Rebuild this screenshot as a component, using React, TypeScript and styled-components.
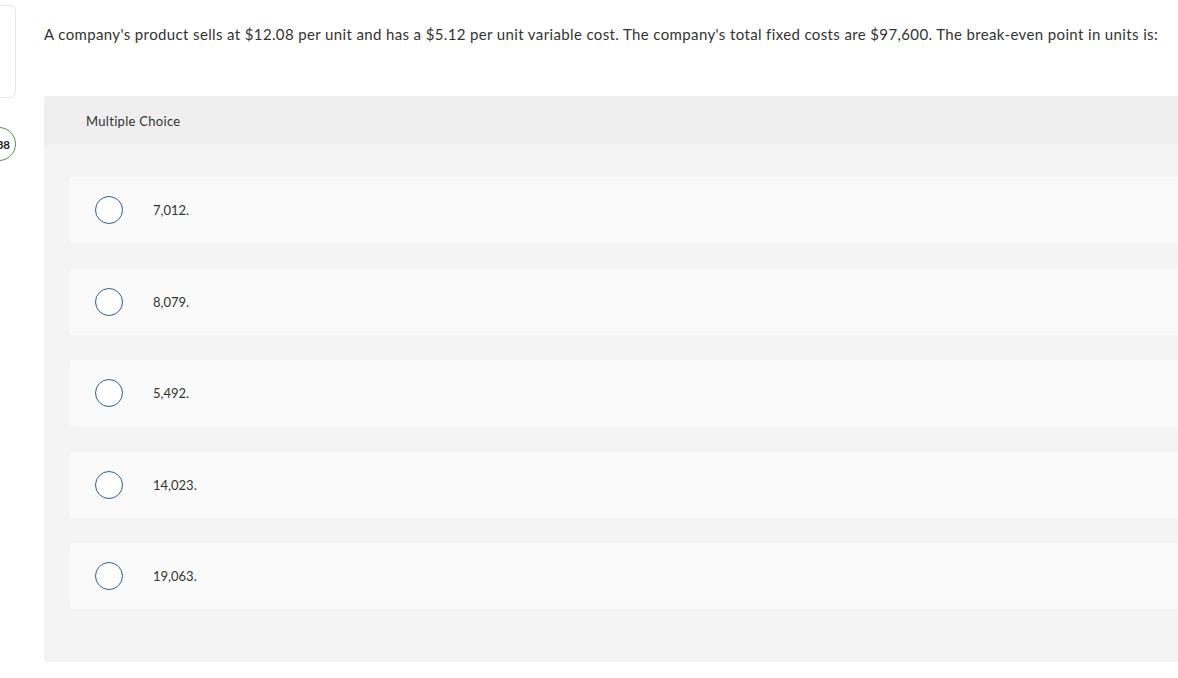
import React from "react";
import styled, { createGlobalStyle } from "styled-components";

const Global = createGlobalStyle`
  html, body { margin: 0; padding: 0; background: #ffffff; }
  body { font-family: Lato, "Open Sans", "Liberation Sans", sans-serif; color: #333333; overflow: hidden; }
`;

const Page = styled.div`
  display: flex;
  align-items: flex-start;
  gap: 28px;
  width: 1178px;
  height: 678px;
  overflow: hidden;
`;

const Rail = styled.div`
  width: 16px;
  flex: none;
  display: flex;
  flex-direction: column;
  align-items: flex-end;
  padding-top: 5px;
`;

const SideCard = styled.div`
  width: 40px;
  height: 91px;
  border: 1px solid #e6e6e6;
  border-radius: 6px;
  background: #fff;
`;

const Badge = styled.div`
  margin-top: 29px;
  width: 34px;
  height: 34px;
  border: 1.5px solid #5b8c4f;
  border-radius: 50%;
  background: #fff;
  display: flex;
  align-items: center;
  justify-content: flex-end;
  padding-right: 5px;
  box-sizing: border-box;
  font-size: 11.5px;
  font-weight: 700;
  color: #222;
`;

const Main = styled.div`
  flex: 1;
  display: flex;
  flex-direction: column;
  padding-top: 24px;
  min-width: 0;
`;

const Question = styled.p`
  margin: 0;
  font-size: 15px;
  line-height: 20px;
  letter-spacing: 0.37px;
  color: #333;
  white-space: nowrap;
`;

const Panel = styled.section`
  margin-top: 52px;
  background: #f4f4f4;
  border-radius: 4px 0 0 4px;
  height: 566px;
  box-sizing: border-box;
`;

const PanelHeader = styled.div`
  height: 49px;
  background: #efefef;
  border-radius: 4px 0 0 0;
  display: flex;
  align-items: center;
  padding-left: 42px;
  font-size: 13px;
  letter-spacing: 0.3px;
  color: #333;
`;

const Choices = styled.div`
  display: flex;
  flex-direction: column;
  gap: 25.5px;
  padding: 32px 0 0 26px;
`;

const Choice = styled.label`
  height: 66px;
  background: #fafafa;
  border-radius: 3px 0 0 3px;
  display: flex;
  align-items: center;
  padding-left: 25px;
  gap: 30px;
  cursor: pointer;
`;

const Radio = styled.span`
  width: 28px;
  height: 28px;
  box-sizing: border-box;
  border: 1.5px solid #2f5f8f;
  border-radius: 50%;
  background: #fff;
  flex: none;
`;

const ChoiceText = styled.span`
  font-size: 13px;
  color: #333;
`;

const options = ["7,012.", "8,079.", "5,492.", "14,023.", "19,063."];

export default function App() {
  return (
    <>
      <Global />
      <Page>
        <Rail>
          <SideCard />
          <Badge>38</Badge>
        </Rail>
        <Main>
          <Question>
            A company's product sells at $12.08 per unit and has a $5.12 per unit variable cost. The company's total fixed costs are $97,600. The break-even point in units is:
          </Question>
          <Panel>
            <PanelHeader>Multiple Choice</PanelHeader>
            <Choices>
              {options.map((o) => (
                <Choice key={o}>
                  <Radio />
                  <ChoiceText>{o}</ChoiceText>
                </Choice>
              ))}
            </Choices>
          </Panel>
        </Main>
      </Page>
    </>
  );
}
